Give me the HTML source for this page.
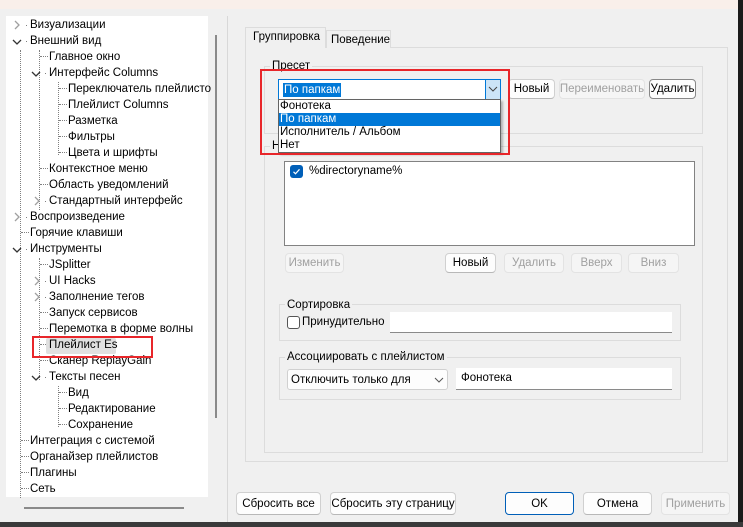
<!DOCTYPE html>
<html><head><meta charset="utf-8">
<style>
*{box-sizing:border-box;margin:0;padding:0}
body{width:743px;height:527px;overflow:hidden;background:#f0f0f0;font-family:"Liberation Sans",sans-serif;font-size:11.5px;color:#000;position:relative}
.a{position:absolute;white-space:nowrap}
.btn{position:absolute;background:#fdfdfd;border:1px solid #d0d0d0;border-radius:4px;text-align:center;font-size:11.5px;display:flex;align-items:center;justify-content:center;border-bottom-color:#b8b8b8}
.dis{color:#a0a0a0;background:#f5f5f5;border-color:#e3e3e3}
.grp{position:absolute;border:1px solid #dcdcdc}
.lbl{position:absolute;background:#f0f0f0;padding:0 2px;font-size:11.5px;line-height:13px}
.t{position:absolute;line-height:16px;font-size:11.5px;white-space:nowrap}
.dv{position:absolute;border-left:1px dotted #808080;width:0}
.dh{position:absolute;border-top:1px dotted #808080;height:0}
.inp{position:absolute;background:#fff;border-bottom:1px solid #8a8a8a}
</style></head><body>
<div class="a" style="left:0;top:0;width:743px;height:9px;background:#f9efea"></div>
<div class="a" style="left:738px;top:0;width:5px;height:527px;background:#1a1a1a"></div>
<div class="a" style="left:0;top:522px;width:743px;height:5px;background:#3a3a3a"></div>

<!-- tree -->
<div class="a" style="left:6px;top:16px;width:202px;height:481px;background:#fff"></div>
<div class="a" style="left:215px;top:35px;width:2px;height:383px;background:#8a8a8a"></div>
<div class="a" style="left:24px;top:507px;width:160px;height:2px;background:#8a8a8a"></div>
<div class="a" style="left:227px;top:16px;width:1px;height:506px;background:#d8d8d8"></div>

<div class="dv" style="left:20px;top:50px;height:448px"></div>
<div class="dv" style="left:39px;top:50px;height:160px"></div>
<div class="dv" style="left:58px;top:82px;height:73px"></div>
<div class="dv" style="left:39px;top:258px;height:122px"></div>
<div class="dv" style="left:58px;top:386px;height:41px"></div>
<!-- horizontal dots -->
<div class="dh" style="left:40px;top:56px;width:8px"></div>
<div class="dh" style="left:59px;top:88px;width:8px"></div>
<div class="dh" style="left:59px;top:104px;width:8px"></div>
<div class="dh" style="left:59px;top:120px;width:8px"></div>
<div class="dh" style="left:59px;top:136px;width:8px"></div>
<div class="dh" style="left:59px;top:152px;width:8px"></div>
<div class="dh" style="left:40px;top:168px;width:8px"></div>
<div class="dh" style="left:40px;top:184px;width:8px"></div>
<div class="dh" style="left:21px;top:232px;width:8px"></div>
<div class="dh" style="left:40px;top:264px;width:8px"></div>
<div class="dh" style="left:40px;top:312px;width:8px"></div>
<div class="dh" style="left:40px;top:328px;width:8px"></div>
<div class="dh" style="left:40px;top:344px;width:8px"></div>
<div class="dh" style="left:40px;top:360px;width:8px"></div>
<div class="dh" style="left:59px;top:392px;width:8px"></div>
<div class="dh" style="left:59px;top:408px;width:8px"></div>
<div class="dh" style="left:59px;top:424px;width:8px"></div>
<div class="dh" style="left:21px;top:440px;width:8px"></div>
<div class="dh" style="left:21px;top:456px;width:8px"></div>
<div class="dh" style="left:21px;top:472px;width:8px"></div>
<div class="dh" style="left:21px;top:488px;width:8px"></div>
<svg class="a" style="left:0;top:0" width="230" height="500">
<g fill="none" stroke="#a0a0a0" stroke-width="1.3">
<path d="M15 21l4 4-4 4"/><path d="M15 213l4 4-4 4"/><path d="M35 197l4 4-4 4"/><path d="M35 277l4 4-4 4"/><path d="M35 293l4 4-4 4"/>
</g>
<g fill="none" stroke="#333" stroke-width="1.3">
<path d="M13 40l4 4 4-4"/><path d="M32 72l4 4 4-4"/><path d="M13 248l4 4 4-4"/><path d="M32 376l4 4 4-4"/>
</g>
<g fill="#808080">
<rect x="26" y="25" width="1" height="1"/><rect x="26" y="41" width="1" height="1"/><rect x="45" y="73" width="1" height="1"/><rect x="45" y="201" width="1" height="1"/><rect x="26" y="217" width="1" height="1"/><rect x="26" y="249" width="1" height="1"/><rect x="45" y="281" width="1" height="1"/><rect x="45" y="297" width="1" height="1"/><rect x="45" y="377" width="1" height="1"/>
</g>
</svg>
<div class="t" style="left:30px;top:17px">Визуализации</div>
<div class="t" style="left:30px;top:33px">Внешний вид</div>
<div class="t" style="left:49px;top:49px">Главное окно</div>
<div class="t" style="left:49px;top:65px">Интерфейс Columns</div>
<div class="t" style="left:68px;top:81px">Переключатель плейлисто</div>
<div class="t" style="left:68px;top:97px">Плейлист Columns</div>
<div class="t" style="left:68px;top:113px">Разметка</div>
<div class="t" style="left:68px;top:129px">Фильтры</div>
<div class="t" style="left:68px;top:145px">Цвета и шрифты</div>
<div class="t" style="left:49px;top:161px">Контекстное меню</div>
<div class="t" style="left:49px;top:177px">Область уведомлений</div>
<div class="t" style="left:49px;top:193px">Стандартный интерфейс</div>
<div class="t" style="left:30px;top:209px">Воспроизведение</div>
<div class="t" style="left:30px;top:225px">Горячие клавиши</div>
<div class="t" style="left:30px;top:241px">Инструменты</div>
<div class="t" style="left:49px;top:257px">JSplitter</div>
<div class="t" style="left:49px;top:273px">UI Hacks</div>
<div class="t" style="left:49px;top:289px">Заполнение тегов</div>
<div class="t" style="left:49px;top:305px">Запуск сервисов</div>
<div class="t" style="left:49px;top:321px">Перемотка в форме волны</div>
<div class="a" style="left:46px;top:338px;width:70px;height:16px;background:#e0e0e0;border-radius:2px"></div>
<div class="t" style="left:49px;top:337px">Плейлист Es</div>
<div class="t" style="left:49px;top:353px">Сканер ReplayGain</div>
<div class="t" style="left:49px;top:369px">Тексты песен</div>
<div class="t" style="left:68px;top:385px">Вид</div>
<div class="t" style="left:68px;top:401px">Редактирование</div>
<div class="t" style="left:68px;top:417px">Сохранение</div>
<div class="t" style="left:30px;top:433px">Интеграция с системой</div>
<div class="t" style="left:30px;top:449px">Органайзер плейлистов</div>
<div class="t" style="left:30px;top:465px">Плагины</div>
<div class="t" style="left:30px;top:481px">Сеть</div>
<div class="a" style="left:32px;top:336px;width:121px;height:22px;border:2px solid #e8262a"></div>

<!-- tabs -->
<div class="a" style="left:245px;top:47px;width:483px;height:415px;border:1px solid #dcdcdc;background:#f0f0f0"></div>
<div class="a" style="left:326px;top:30px;width:65px;height:18px;border:1px solid #dcdcdc;border-bottom:none;background:#f0f0f0;font-size:11.5px;padding:3px 0 0 4px">Поведение</div>
<div class="a" style="left:245px;top:27px;width:81px;height:21px;border:1px solid #dcdcdc;border-bottom:none;background:#f0f0f0;font-size:11.5px;padding:3px 0 0 7px">Группировка</div>

<div class="grp" style="left:264px;top:66px;width:439px;height:68px"></div>
<div class="lbl" style="left:270px;top:60px">Пресет</div>
<div class="btn" style="left:508px;top:79px;width:47px;height:20px">Новый</div>
<div class="btn dis" style="left:559px;top:79px;width:86px;height:20px">Переименовать</div>
<div class="btn" style="left:649px;top:79px;width:47px;height:20px;border-color:#888">Удалить</div>

<div class="grp" style="left:264px;top:146px;width:439px;height:307px"></div>
<div class="lbl" style="left:270px;top:140px">Н</div>
<div class="a" style="left:284px;top:161px;width:411px;height:85px;background:#fff;border:1px solid #828282"></div>
<div class="a" style="left:290px;top:165px;width:13px;height:13px;background:#005fb8;border-radius:3px"></div>
<svg class="a" style="left:290px;top:165px" width="13" height="13"><path d="M3.5 6.8l2 2 4-4.5" fill="none" stroke="#fff" stroke-width="1.2"/></svg>
<div class="a" style="left:309px;top:165px;font-size:11.5px">%directoryname%</div>
<div class="btn dis" style="left:285px;top:253px;width:59px;height:20px">Изменить</div>
<div class="btn" style="left:445px;top:253px;width:51px;height:20px">Новый</div>
<div class="btn dis" style="left:504px;top:253px;width:60px;height:20px">Удалить</div>
<div class="btn dis" style="left:571px;top:253px;width:51px;height:20px">Вверх</div>
<div class="btn dis" style="left:628px;top:253px;width:51px;height:20px">Вниз</div>

<div class="grp" style="left:279px;top:304px;width:402px;height:37px"></div>
<div class="lbl" style="left:285px;top:299px">Сортировка</div>
<div class="a" style="left:287px;top:316px;width:13px;height:13px;border:1px solid #555;border-radius:3px;background:#fff"></div>
<div class="a" style="left:302px;top:316px">Принудительно</div>
<div class="inp" style="left:390px;top:312px;width:282px;height:21px"></div>

<div class="grp" style="left:279px;top:357px;width:402px;height:43px"></div>
<div class="lbl" style="left:285px;top:351px">Ассоциировать с плейлистом</div>
<div class="a" style="left:287px;top:369px;width:161px;height:21px;background:#fdfdfd;border:1px solid #d0d0d0;border-radius:3px;padding:4px 0 0 3px">Отключить только для</div>
<svg class="a" style="left:434px;top:377px" width="10" height="6"><path d="M1 1l4 4 4-4" fill="none" stroke="#555"/></svg>
<div class="inp" style="left:456px;top:368px;width:216px;height:22px;padding:4px 0 0 5px">Фонотека</div>

<div class="btn" style="left:236px;top:492px;width:85px;height:23px">Сбросить все</div>
<div class="btn" style="left:330px;top:492px;width:126px;height:23px">Сбросить эту страницу</div>
<div class="btn" style="left:505px;top:492px;width:69px;height:23px;border:1px solid #005fb8">OK</div>
<div class="btn" style="left:583px;top:492px;width:69px;height:23px">Отмена</div>
<div class="btn dis" style="left:661px;top:492px;width:69px;height:23px">Применить</div>

<div class="a" style="left:278px;top:79px;width:223px;height:21px;background:#fff;border:1px solid #0078d7"></div>
<div class="a" style="left:485px;top:80px;width:15px;height:19px;background:#cce4f7;border-left:1px solid #0078d7"></div>
<svg class="a" style="left:488px;top:86px" width="10" height="6"><path d="M1 1l4 4 4-4" fill="none" stroke="#444"/></svg>
<div class="a" style="left:283px;top:83px;background:#0078d7;color:#fff;padding:0 1px;line-height:14px">По папкам</div>
<div class="a" style="left:278px;top:99px;width:223px;height:54px;background:#fff;border:1px solid #646464;box-shadow:2px 2px 2px rgba(0,0,0,.25)"></div>
<div class="a" style="left:279px;top:113px;width:221px;height:13px;background:#0078d7"></div>
<div class="a" style="left:280px;top:100px;line-height:13px">Фонотека</div>
<div class="a" style="left:280px;top:113px;line-height:13px;color:#fff">По папкам</div>
<div class="a" style="left:280px;top:126px;line-height:13px">Исполнитель / Альбом</div>
<div class="a" style="left:280px;top:139px;line-height:13px">Нет</div>
<div class="a" style="left:260px;top:69px;width:250px;height:86px;border:2px solid #e8262a"></div>
</body></html>
